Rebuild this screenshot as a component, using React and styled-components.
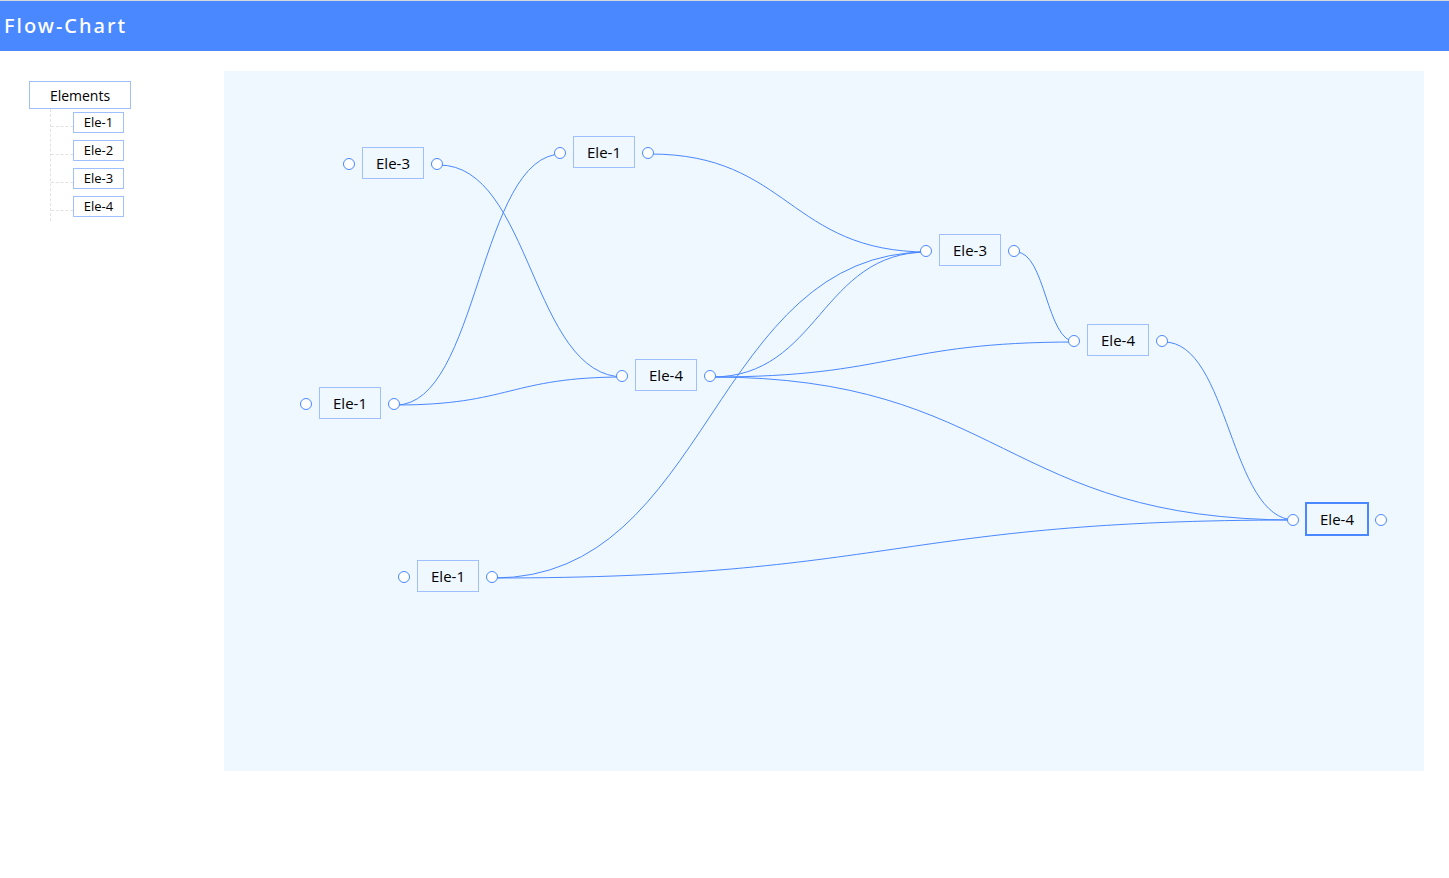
import React, { useState } from "react";
import styled, { createGlobalStyle } from "styled-components";

const GlobalStyle = createGlobalStyle`
  *, *::before { box-sizing: border-box; }
  body {
    margin: 0;
    background: #fff;
    color: #000;
    font-family: "Open Sans", "Noto Sans", sans-serif;
  }
`;

const Header = styled.header`
  display: flex;
  align-items: center;
  height: 51px;
  padding-left: 4px;
  border-top: 1px solid #d5d9e0;
  background: #4a88ff;
`;

const Title = styled.h1`
  margin: 0;
  color: #fff;
  font-family: "Noto Sans", "Open Sans", sans-serif;
  font-size: 20px;
  font-weight: 500;
  line-height: 28px;
  letter-spacing: 2px;
`;

const Main = styled.main`
  display: flex;
  align-items: flex-start;
  padding: 20px 25px 20px 0;
`;

const Sidebar = styled.aside`
  flex: 0 0 224px;
  padding: 10px 0 0 29px;
`;

const ElementsButton = styled.button`
  display: block;
  width: 102px;
  height: 28px;
  padding: 2px 0 0;
  border: 1px solid #a0bfff;
  background: #fff;
  color: #000;
  font: 14px/24px "Open Sans", "Noto Sans", sans-serif;
`;

const ElementList = styled.ul`
  width: 95px;
  margin: 0 0 0 21px;
  padding: 0;
  border-left: 1px dashed #e2e2e2;
  list-style: none;
`;

const ElementRow = styled.li`
  display: flex;
  align-items: flex-start;
  height: 28px;

  &::before {
    content: "";
    width: 22px;
    height: 18px;
    border-bottom: 1px dashed #e2e2e2;
  }
`;

const ElementItem = styled.button`
  width: 51px;
  height: 21px;
  margin-top: 3px;
  padding: 0;
  border: 1px solid #a0bfff;
  background: #fff;
  color: #000;
  font: 13px/19px "Open Sans", "Noto Sans", sans-serif;
  cursor: grab;
`;

const Canvas = styled.section`
  position: relative;
  flex: 1;
  min-width: 0;
  height: 700px;
  overflow: hidden;
  background: #eff7ff;
`;

const Links = styled.svg`
  position: absolute;
  inset: 0;
  width: 100%;
  height: 100%;
  fill: none;
  stroke: #4a88ff;
`;

const Node = styled.div`
  position: absolute;
  left: ${(p) => p.$x}px;
  top: ${(p) => p.$y}px;
  display: flex;
  align-items: flex-start;
  gap: 7px;
`;

const Port = styled.span`
  width: 12px;
  height: 12px;
  margin-top: 11px;
  border: 1px solid #4a88ff;
  border-radius: 50%;
  background: #fff;
`;

const NodeBox = styled.button`
  width: 62px;
  height: 32px;
  padding: 0;
  border: 1px solid ${(p) => (p.$selected ? "#4a88ff" : "#a0bfff")};
  outline: ${(p) => (p.$selected ? "1px solid #4a88ff" : "none")};
  background: #eff7ff;
  color: #000;
  font: 15px/30px "Open Sans", "Noto Sans", sans-serif;
  cursor: move;
`;

const elements = ["Ele-1", "Ele-2", "Ele-3", "Ele-4"];

const nodes = {
  a: { label: "Ele-3", x: 119, y: 76 },
  b: { label: "Ele-1", x: 330, y: 65 },
  c: { label: "Ele-3", x: 696, y: 163 },
  d: { label: "Ele-4", x: 844, y: 253 },
  e: { label: "Ele-4", x: 392, y: 288 },
  f: { label: "Ele-1", x: 76, y: 316 },
  g: { label: "Ele-1", x: 174, y: 489 },
  h: { label: "Ele-4", x: 1063, y: 432 },
};

const links = [
  ["a", "e"],
  ["f", "b"],
  ["f", "e"],
  ["b", "c"],
  ["e", "c"],
  ["e", "d"],
  ["e", "h"],
  ["g", "c"],
  ["g", "h"],
  ["c", "d"],
  ["d", "h"],
];

const curve = (from, to, toSelected) => {
  const x1 = from.x + 96;
  const y1 = from.y + 18;
  const x2 = to.x + 8;
  const y2 = to.y + (toSelected ? 17 : 18);
  const mid = (x1 + x2) / 2;
  return `M${x1} ${y1}C${mid} ${y1} ${mid} ${y2} ${x2} ${y2}`;
};

export default function App() {
  const [selected, setSelected] = useState("h");

  return (
    <>
      <GlobalStyle />
      <Header>
        <Title>Flow-Chart</Title>
      </Header>
      <Main>
        <Sidebar>
          <ElementsButton type="button">Elements</ElementsButton>
          <ElementList>
            {elements.map((name) => (
              <ElementRow key={name}>
                <ElementItem type="button">{name}</ElementItem>
              </ElementRow>
            ))}
          </ElementList>
        </Sidebar>
        <Canvas>
          <Links aria-hidden="true">
            {links.map(([from, to]) => (
              <path
                key={from + to}
                d={curve(nodes[from], nodes[to], to === selected)}
              />
            ))}
          </Links>
          {Object.entries(nodes).map(([id, node]) => (
            <Node key={id} $x={node.x} $y={node.y}>
              <Port />
              <NodeBox
                type="button"
                $selected={id === selected}
                onClick={() => setSelected(id)}
              >
                {node.label}
              </NodeBox>
              <Port />
            </Node>
          ))}
        </Canvas>
      </Main>
    </>
  );
}
